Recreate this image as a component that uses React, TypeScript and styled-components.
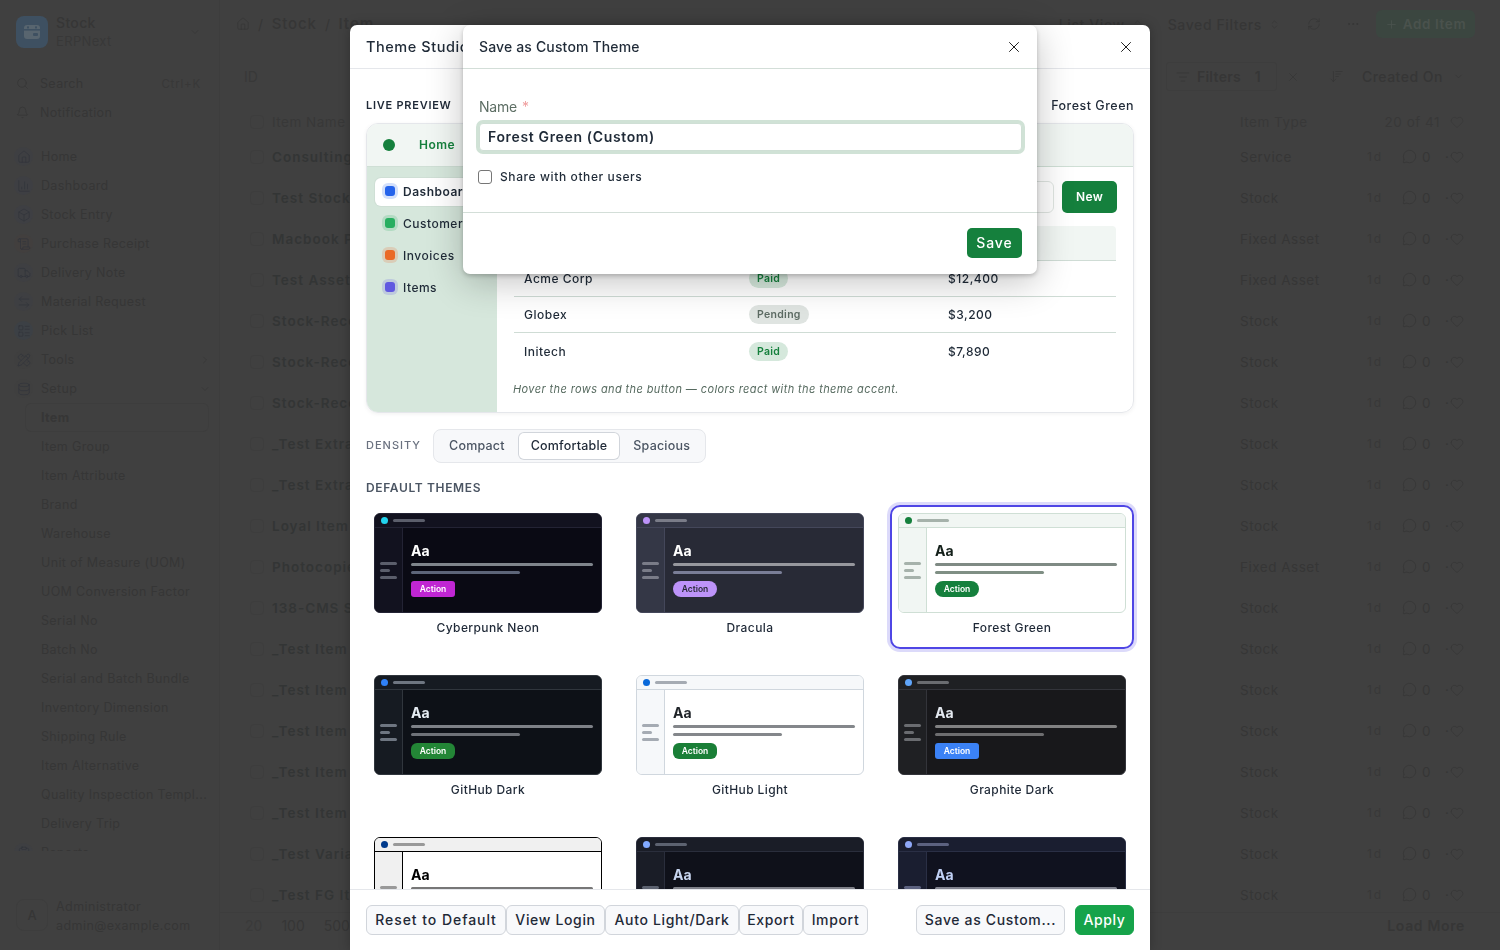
import React from 'react';
import styled, { createGlobalStyle } from 'styled-components';
import {
  ArrowDownWideNarrow, ArrowLeftRight, Bell, Box, ChartColumn, ChevronDown, ChevronRight, ChevronsUpDown,
  ClipboardList, Database, Ellipsis, Heart, House, LayoutList, ListFilter, MessageCircle, PencilRuler,
  Plus, RefreshCw, ScrollText, Search, Truck, X,
} from 'lucide-react';

const GlobalStyle = createGlobalStyle`
  * { box-sizing: border-box; }
  html, body { margin: 0; padding: 0; height: 100%; overflow: hidden; }
  body { font-family: Inter, "Noto Sans", "Liberation Sans", sans-serif; background: #404040; }
`;

// the page behind the dialogs is painted in its dimmed colours
const dim = { text: '#333535', soft: '#363636', faint: '#383838', line: '#3d3d3d' };

const Page = styled.div`
  width: 100vw;
  height: 100vh;
  display: flex;
  background: #404040;
  color: ${dim.soft};
  overflow: hidden;
`;
const Sidebar = styled.aside`
  width: 220px;
  flex: none;
  display: flex;
  flex-direction: column;
  border-right: 1px solid ${dim.line};
`;
const Brand = styled.div`
  height: 69px;
  padding: 16px 18px 0 16px;
  display: flex;
  align-items: flex-start;
  gap: 8px;
`;
const BrandText = styled.div`
  flex: 1;
  margin-top: -3px;
  font-size: 13px;
  line-height: 19px;
  letter-spacing: 0.35px;
`;
const BrandName = styled.div`
  font-size: 14px;
  font-weight: 500;
`;
const BrandSub = styled.div`
  color: ${dim.faint};
`;
const SearchRow = styled.div`
  height: 29px;
  padding: 0 18px 0 16px;
  display: flex;
  align-items: center;
  gap: 11px;
  font-size: 12.5px;
  letter-spacing: 0.35px;
  margin-bottom: ${p => p.$last ? '15px' : '0'};
`;
const Kbd = styled.span`
  margin-left: auto;
  font-size: 11.5px;
  letter-spacing: 0.8px;
  color: ${dim.faint};
`;
const Nav = styled.nav`
  flex: 1;
  overflow: hidden;
`;
const NavRow = styled.div`
  height: 29px;
  margin: 0 ${p => p.$sub ? '10px' : '0'} 0 ${p => p.$sub ? '25px' : '14px'};
  padding: 0 8px 0 ${p => p.$sub ? '16px' : '0'};
  display: flex;
  align-items: center;
  gap: 8px;
  font-size: 12.5px;
  letter-spacing: 0.35px;
  white-space: nowrap;
  font-weight: ${p => p.$active ? 700 : 400};
  border-radius: 6px;
  box-shadow: ${p => p.$active ? `inset 0 0 0 1px ${dim.line}` : 'none'};
`;
const NavIcon = styled.span`
  width: 19px;
  height: 19px;
  display: flex;
  align-items: center;
  justify-content: center;
  border-radius: 50%;
  background: ${p => p.$tint};
  color: #32353b;
`;
const NavEnd = styled.span`
  margin-left: auto;
  display: flex;
`;
const UserBox = styled.div`
  height: 99px;
  padding: 48px 16px 0;
  display: flex;
  gap: 8px;
`;
const Avatar = styled.div`
  width: 32px;
  height: 32px;
  border-radius: 8px;
  border: 1px solid ${dim.line};
  display: flex;
  align-items: center;
  justify-content: center;
  font-size: 13px;
  font-weight: 500;
`;
const UserText = styled.div`
  margin-top: -2px;
  font-size: 12.5px;
  line-height: 19px;
  letter-spacing: 0.45px;
`;
const Main = styled.main`
  flex: 1;
  min-width: 0;
  display: flex;
  flex-direction: column;
`;
const TopBar = styled.div`
  height: 48px;
  flex: none;
  padding: 0 25px 0 16px;
  display: flex;
  align-items: center;
  gap: 8px;
  font-size: 14px;
  letter-spacing: 0.6px;
`;
const Crumb = styled.span`
  font-size: 15px;
  letter-spacing: 0.9px;
  margin-top: -1px;
  font-weight: ${p => p.$strong ? 600 : 500};
`;
const TopAction = styled.span`
  display: flex;
  align-items: center;
  gap: 7px;
  margin-left: ${p => p.$gap};
  font-weight: 500;
`;
const AddButton = styled.div`
  margin-left: 8px;
  width: 99px;
  height: 28px;
  border-radius: 6px;
  background: #3b4640;
  color: #4a524d;
  display: flex;
  align-items: center;
  justify-content: center;
  gap: 5px;
  font-size: 13.5px;
  font-weight: 600;
`;
const FilterBar = styled.div`
  height: 29px;
  flex: none;
  margin: 14px 0 16px;
  padding: 0 36px 0 24px;
  display: flex;
  align-items: center;
  font-size: 14px;
  letter-spacing: 0.5px;
  font-weight: 500;
`;
const IdLabel = styled.span`
  font-weight: 400;
  letter-spacing: 0;
  color: ${dim.faint};
`;
const FilterBox = styled.div`
  width: 111px;
  height: 29px;
  margin-left: auto;
  padding: 0 15px 0 9px;
  display: flex;
  align-items: center;
  gap: 7px;
  border: 1px solid ${dim.line};
  border-radius: 3px;
  letter-spacing: 0.3px;
  font-weight: 600;
`;
const FilterCount = styled.span`
  margin-left: auto;
`;
const HeaderRow = styled.div`
  height: 29px;
  flex: none;
  padding: 0 36px 0 30px;
  display: grid;
  grid-template-columns: 22px 1fr 127px 83px 14px;
  align-items: center;
  font-size: 13.5px;
  letter-spacing: 0.5px;
  color: ${dim.faint};
`;
const Rows = styled.div`
  flex: 1;
  min-height: 0;
  overflow: hidden;
`;
const Row = styled.div`
  height: 41px;
  padding: 0 36px 0 30px;
  display: grid;
  grid-template-columns: 22px 1fr 127px 35px 43px 5px 14px;
  align-items: center;
  font-size: 13.5px;
  letter-spacing: 0.5px;
`;
const RowBox = styled.span`
  width: 14px;
  height: 14px;
  border: 1px solid ${dim.line};
  border-radius: 4px;
`;
const RowName = styled.span`
  font-weight: 600;
  letter-spacing: 1px;
  color: ${dim.text};
`;
const Age = styled.span`
  font-size: 12px;
  color: ${dim.faint};
  letter-spacing: 1.8px;
`;
const Counter = styled.span`
  display: flex;
  align-items: center;
  gap: 5px;
`;
const CountRight = styled.span`
  padding-right: 10px;
  text-align: right;
`;
const ListFooter = styled.div`
  height: 38px;
  flex: none;
  padding: 0 35px 12px 25px;
  display: flex;
  align-items: center;
  font-size: 14px;
  gap: 19px;
  border-top: 1px solid ${dim.line};
`;
const PageSize = styled.span`
  color: ${p => p.$on ? '#3a3a3a' : dim.soft};
`;
const LoadMore = styled.span`
  margin-left: auto;
  font-weight: 600;
  letter-spacing: 0.65px;
`;

const Dialog = styled.section`
  position: fixed;
  background: #fff;
  border-radius: 7px;
  display: flex;
  flex-direction: column;
  overflow: hidden;
`;
const StudioDialog = styled(Dialog)`
  left: 350px;
  top: 25px;
  width: 800px;
  height: 925px;
  border-radius: 7px 7px 0 0;
  box-shadow: 0 0 12px rgba(0, 0, 0, 0.25);
`;
const SaveDialog = styled(Dialog)`
  left: 463px;
  top: 25px;
  width: 574px;
  height: 249px;
  box-shadow: 0 2px 4px rgba(0, 0, 0, 0.2), 0 8px 36px rgba(0, 0, 0, 0.24);
`;
const DialogHead = styled.header`
  height: 44px;
  flex: none;
  padding: 0 ${p => p.$tight ? '14px' : '15px'} 0 16px;
  display: flex;
  align-items: center;
  justify-content: space-between;
  border-bottom: 1px solid ${p => p.$line};
  color: #1f2a37;
  font-size: ${p => p.$tight ? '14px' : '14.5px'};
  font-weight: 500;
  letter-spacing: ${p => p.$tight ? '0.15px' : '0.55px'};
  svg { color: #111; }
`;
const StudioBody = styled.div`
  flex: 1;
  min-height: 0;
  overflow: hidden;
  padding: 29px 16px 0;
`;
const SectionHead = styled.div`
  height: 14px;
  margin-bottom: 11px;
  display: flex;
  justify-content: space-between;
  align-items: center;
`;
const LiveLabel = styled.span`
  font-size: 11px;
  font-weight: 600;
  letter-spacing: 0.75px;
  color: #1f2937;
`;
const CurrentName = styled.span`
  font-size: 12.5px;
  font-weight: 500;
  letter-spacing: 0.5px;
  color: #1f2937;
`;
const Preview = styled.div`
  height: 290px;
  border: 1px solid #e5e7eb;
  border-radius: 12px;
  overflow: hidden;
  display: flex;
  flex-direction: column;
  box-shadow: 0 1px 4px rgba(0, 0, 0, 0.06);
`;
const PreviewTop = styled.div`
  height: 43px;
  flex: none;
  padding: 0 0 1px 16px;
  display: flex;
  align-items: center;
  gap: 24px;
  background: #f1f6f3;
  border-bottom: 1px solid #cfdfd5;
  color: #15803d;
  font-size: 12px;
  font-weight: 600;
  letter-spacing: 0.45px;
`;
const PreviewDot = styled.span`
  width: 12px;
  height: 12px;
  border-radius: 50%;
  background: #15803d;
`;
const PreviewMid = styled.div`
  flex: 1;
  min-height: 0;
  display: flex;
`;
const PreviewSide = styled.div`
  width: 130px;
  flex: none;
  padding: 11px 8px;
  display: flex;
  flex-direction: column;
  gap: 4px;
  background: #d6e7dc;
`;
const SideItem = styled.div`
  height: 28px;
  padding: 0 0 2px 7px;
  display: flex;
  align-items: center;
  gap: 5px;
  border-radius: 6px;
  font-size: 12px;
  letter-spacing: 0.5px;
  color: #1f2a37;
  background: ${p => p.$active ? '#fff' : 'transparent'};
  font-weight: ${p => p.$active ? 600 : 500};
  box-shadow: ${p => p.$active ? '0 0 0 1px #cfdfd5' : 'none'};
`;
const SideGlyph = styled.span`
  width: 10px;
  height: 10px;
  margin: 3px;
  border-radius: 3px;
  background: ${p => p.$color};
  box-shadow: 0 0 0 3px ${p => p.$color}33;
`;
const PreviewMain = styled.div`
  flex: 1;
  min-width: 0;
  padding: 14px 16px 0 16px;
`;
const PreviewTools = styled.div`
  display: flex;
  gap: 8px;
  justify-content: flex-end;
  margin-bottom: 13px;
`;
const PreviewSearch = styled.div`
  flex: 1;
  height: 32px;
  border: 1px solid #dfe5e1;
  border-radius: 6px;
`;
const NewButton = styled.div`
  width: 55px;
  height: 32px;
  padding-bottom: 1px;
  border-radius: 5px;
  background: #15803d;
  color: #fff;
  font-size: 12px;
  font-weight: 600;
  letter-spacing: 0.3px;
  display: flex;
  align-items: center;
  justify-content: center;
`;
const TableRow = styled.div`
  display: grid;
  grid-template-columns: 225px 199px 1fr;
  align-items: center;
  margin: 0 1px;
  height: ${p => p.$head ? '35px' : '36px'};
  background: ${p => p.$head ? '#f1f6f3' : 'transparent'};
  border-bottom: ${p => p.$plain ? 'none' : '1px solid #cfdcd5'};
  border-radius: ${p => p.$head ? '4px 4px 0 0' : '0'};
  font-size: 12px;
  font-weight: 500;
  letter-spacing: 0.5px;
  color: #1f2a37;
`;
const Cell = styled.div`
  padding-left: 10px;
`;
const Pill = styled.span`
  display: inline-block;
  height: 19px;
  line-height: 19px;
  padding: 0 8px;
  border-radius: 10px;
  font-size: 10.5px;
  font-weight: 600;
  letter-spacing: 0.3px;
  background: ${p => p.$pending ? '#dfe4e1' : '#d5e8dc'};
  color: ${p => p.$pending ? '#5c6b63' : '#15803d'};
`;
const PreviewNote = styled.div`
  margin-top: 13px;
  font-size: 11px;
  font-style: italic;
  letter-spacing: 0.4px;
  color: #566a5f;
`;
const DensityRow = styled.div`
  margin-top: 16px;
  display: flex;
  align-items: center;
  gap: 12px;
`;
const DensityLabel = styled.span`
  margin-top: -2px;
  font-size: 11px;
  font-weight: 500;
  letter-spacing: 1px;
  color: #6b7280;
`;
const Segments = styled.div`
  height: 34px;
  padding: 2px;
  display: flex;
  background: #f7f8fa;
  border: 1px solid #e5e7eb;
  border-radius: 8px;
`;
const Segment = styled.div`
  padding: 0 13px 1px;
  display: flex;
  align-items: center;
  font-size: 12.5px;
  font-weight: 500;
  letter-spacing: 0.2px;
  border-radius: 6px;
  color: ${p => p.$on ? '#1f2937' : '#4b5563'};
  background: ${p => p.$on ? '#fff' : 'transparent'};
  box-shadow: ${p => p.$on ? 'inset 0 0 0 1px #d1d5db' : 'none'};
`;
const ThemesLabel = styled.div`
  margin: 17px 0 9px;
  height: 16px;
  line-height: 16px;
  font-size: 12px;
  font-weight: 600;
  letter-spacing: 0.65px;
  color: #4b5563;
`;
const ThemeGrid = styled.div`
  display: grid;
  grid-template-columns: repeat(3, 244px);
  gap: 18px;
`;
const ThemeCard = styled.div`
  padding: 6px 6px 11px;
  border-radius: 10px;
  border: 2px solid ${p => p.$selected ? '#4f46e5' : 'transparent'};
  box-shadow: ${p => p.$selected ? '0 0 0 3px rgba(79, 70, 229, 0.2)' : 'none'};
`;
const Thumb = styled.div`
  height: 100px;
  border-radius: 6px;
  overflow: hidden;
  display: flex;
  flex-direction: column;
  border: 1px solid ${p => p.$t.line};
  background: ${p => p.$t.bg};
  color: ${p => p.$t.fg};
`;
const ThumbHead = styled.div`
  height: 14px;
  flex: none;
  padding-left: 6px;
  display: flex;
  align-items: center;
  gap: 5px;
  background: ${p => p.$t.panel};
  border-bottom: 1px solid ${p => p.$t.line};
`;
const ThumbDot = styled.span`
  width: 7px;
  height: 7px;
  border-radius: 50%;
  background: ${p => p.$color};
`;
const ThumbBar = styled.span`
  height: 3px;
  border-radius: 2px;
  background: ${p => p.$color};
  width: ${p => p.$w};
`;
const ThumbBody = styled.div`
  flex: 1;
  display: flex;
  min-height: 0;
`;
const ThumbSide = styled.div`
  width: 28px;
  flex: none;
  padding-left: 5px;
  display: flex;
  flex-direction: column;
  justify-content: center;
  align-items: flex-start;
  gap: 4px;
  background: ${p => p.$t.panel};
  border-right: 1px solid ${p => p.$t.line};
`;
const ThumbMain = styled.div`
  flex: 1;
  padding: 0 8px;
  display: flex;
  flex-direction: column;
  justify-content: center;
  align-items: flex-start;
`;
const ThumbTitle = styled.div`
  height: 17px;
  line-height: 16px;
  margin-bottom: 3px;
  font-size: 14px;
  font-weight: 700;
`;
const ThumbLine = styled.div`
  height: 3px;
  border-radius: 2px;
  width: ${p => p.$w};
  margin-bottom: ${p => p.$mb};
  background: ${p => p.$color};
`;
const ThumbAction = styled.div`
  width: 44px;
  height: 16px;
  line-height: 16px;
  text-align: center;
  font-size: 8.5px;
  font-weight: 600;
  border-radius: ${p => p.$t.radius};
  background: ${p => p.$t.btn};
  color: ${p => p.$t.btnFg};
`;
const ThemeName = styled.div`
  margin-top: 7px;
  height: 16px;
  line-height: 16px;
  text-align: center;
  font-size: 12px;
  font-weight: 500;
  letter-spacing: 0.4px;
  color: #1f2937;
`;
const StudioFoot = styled.footer`
  height: 61px;
  flex: none;
  padding: 15px 16px 0;
  display: flex;
  background: #fff;
  border-top: 1px solid #e5e7eb;
`;
const FootButton = styled.div`
  height: 30px;
  width: ${p => p.$w}px;
  padding-bottom: 2px;
  display: flex;
  align-items: center;
  justify-content: center;
  font-size: 14px;
  font-weight: 500;
  letter-spacing: ${p => p.$track || '0.65px'};
  white-space: nowrap;
  color: #1f2937;
  background: #f8f9fb;
  border: 1px solid #d1d5db;
  border-radius: 6px;
`;
const FootRight = styled.div`
  margin-left: auto;
  display: flex;
  gap: 10px;
`;
const ApplyButton = styled(FootButton)`
  background: #16a34a;
  border-color: #16a34a;
  color: #fff;
`;
const SaveBody = styled.div`
  flex: 1;
  padding: 29px 15px 0 16px;
  border-bottom: 1px solid #d3ded8;
`;
const FieldLabel = styled.label`
  display: block;
  height: 17px;
  line-height: 17px;
  font-size: 14px;
  color: #5d6e64;
  letter-spacing: -0.2px;
  margin-bottom: 8px;
`;
const Required = styled.span`
  margin-left: 5px;
  color: #f0a0a0;
`;
const FieldInput = styled.input`
  display: block;
  width: 100%;
  height: 28px;
  padding: 0 8px 2px;
  border: 1px solid #cfdfd5;
  border-radius: 4px;
  outline: none;
  box-shadow: 0 0 0 3px #d0e2d6;
  font-family: inherit;
  font-size: 14px;
  font-weight: 600;
  letter-spacing: 0.65px;
  color: #1f2a37;
`;
const ShareRow = styled.div`
  margin-top: 18px;
  display: flex;
  align-items: center;
  gap: 8px;
  font-size: 12px;
  font-weight: 500;
  letter-spacing: 0.6px;
  color: #1f2a37;
`;
const ShareBox = styled.span`
  width: 14px;
  height: 14px;
  margin-left: -1px;
  border: 1px solid #767676;
  border-radius: 3px;
`;
const SaveFoot = styled.footer`
  height: 61px;
  flex: none;
  padding: 15px 15px 0;
  display: flex;
  justify-content: flex-end;
`;
const SaveButton = styled.div`
  width: 55px;
  height: 30px;
  padding-bottom: 2px;
  border-radius: 5px;
  background: #15803d;
  color: #fff;
  font-size: 14px;
  font-weight: 500;
  letter-spacing: 0.9px;
  display: flex;
  align-items: center;
  justify-content: center;
`;

type Theme = { name: string; bg: string; panel: string; line: string; fg: string; dot: string; btn: string; btnFg: string; radius: string; bar: string; text1: string; text2: string };

const themes: Theme[] = [
  { name: 'Cyberpunk Neon', bg: '#0a0a14', panel: '#12121f', line: '#232334', fg: '#fff', dot: '#22d3ee', btn: '#c026d3', btnFg: '#fff', radius: '3px', bar: '#5b5e6b', text1: '#7f858c', text2: '#5d6579' },
  { name: 'Dracula', bg: '#282a36', panel: '#343746', line: '#44475a', fg: '#fff', dot: '#bd93f9', btn: '#bd93f9', btnFg: '#282a36', radius: '8px', bar: '#7a7c88', text1: '#96979d', text2: '#7a7e97' },
  { name: 'Forest Green', bg: '#fff', panel: '#f1f6f3', line: '#cfdfd5', fg: '#14201a', dot: '#15803d', btn: '#15803d', btnFg: '#fff', radius: '8px', bar: '#a6b2ab', text1: '#7f8a84', text2: '#7f8f84' },
  { name: 'GitHub Dark', bg: '#0d1117', panel: '#161b22', line: '#30363d', fg: '#e6edf3', dot: '#2f81f7', btn: '#238636', btnFg: '#fff', radius: '6px', bar: '#6e7681', text1: '#7d8187', text2: '#6e7278' },
  { name: 'GitHub Light', bg: '#fff', panel: '#f6f8fa', line: '#d0d7de', fg: '#1f2328', dot: '#0969da', btn: '#1a7f37', btnFg: '#fff', radius: '6px', bar: '#a5abb3', text1: '#84878b', text2: '#84878b' },
  { name: 'Graphite Dark', bg: '#18181b', panel: '#1f2023', line: '#33343a', fg: '#e4e9f0', dot: '#60a5fa', btn: '#3b82f6', btnFg: '#fff', radius: '3px', bar: '#6a6c70', text1: '#818182', text2: '#6e6e70' },
  { name: 'High Contrast', bg: '#fff', panel: '#f0f0f0', line: '#000', fg: '#000', dot: '#003a8c', btn: '#003a8c', btnFg: '#fff', radius: '3px', bar: '#999', text1: '#777', text2: '#777' },
  { name: 'Midnight', bg: '#0f111a', panel: '#1a1d27', line: '#2a2e3c', fg: '#c8d6f0', dot: '#82aaff', btn: '#82aaff', btnFg: '#0f111a', radius: '3px', bar: '#5c6270', text1: '#7e8088', text2: '#6a6d78' },
  { name: 'Tokyo Night', bg: '#10121f', panel: '#1a1e30', line: '#2a2f45', fg: '#c0d0f5', dot: '#8fa8f8', btn: '#7aa2f7', btnFg: '#10121f', radius: '3px', bar: '#5c6280', text1: '#80828e', text2: '#6a6d80' },
];

const mainNav = [
  { label: 'Home', Icon: House, tint: '#3e3f42' },
  { label: 'Dashboard', Icon: ChartColumn, tint: '#3e3f43' },
  { label: 'Stock Entry', Icon: Box, tint: '#3e3f43' },
  { label: 'Purchase Receipt', Icon: ScrollText, tint: '#423f3e' },
  { label: 'Delivery Note', Icon: Truck, tint: '#3e3f42' },
  { label: 'Material Request', Icon: ArrowLeftRight, tint: '#3e3f42' },
  { label: 'Pick List', Icon: LayoutList, tint: '#3c4045' },
  { label: 'Tools', Icon: PencilRuler, tint: '#3f3f3f' },
  { label: 'Setup', Icon: Database, tint: '#3f3f3f' },
];
const setupNav = ['Item', 'Item Group', 'Item Attribute', 'Brand', 'Warehouse', 'Unit of Measure (UOM)', 'UOM Conversion Factor', 'Serial No', 'Batch No', 'Serial and Batch Bundle', 'Inventory Dimension', 'Shipping Rule', 'Item Alternative', 'Quality Inspection Templ...', 'Delivery Trip'];

const items = [
  ['Consulting', 'Service'], ['Test Stock Item', 'Stock'], ['Macbook Pro', 'Fixed Asset'], ['Test Asset', 'Fixed Asset'],
  ['Stock-Reconciliation 1', 'Stock'], ['Stock-Reconciliation 2', 'Stock'], ['Stock-Reconciliation 3', 'Stock'],
  ['_Test Extra Item 1', 'Stock'], ['_Test Extra Item 2', 'Stock'], ['Loyal Item', 'Stock'], ['Photocopier', 'Fixed Asset'],
  ['138-CMS Shoe', 'Stock'], ['_Test Item 1', 'Stock'], ['_Test Item 2', 'Stock'], ['_Test Item 3', 'Stock'],
  ['_Test Item 4', 'Stock'], ['_Test Item 5', 'Stock'], ['_Test Variant', 'Stock'], ['_Test FG Item', 'Stock'],
];

const sideItems = [
  { label: 'Dashboard', color: '#2563eb', active: true },
  { label: 'Customers', color: '#27ae60' },
  { label: 'Invoices', color: '#ea6a26' },
  { label: 'Items', color: '#6058e0' },
];
const invoices = [
  { name: 'Acme Corp', status: 'Paid', total: '$12,400' },
  { name: 'Globex', status: 'Pending', total: '$3,200' },
  { name: 'Initech', status: 'Paid', total: '$7,890' },
];

const LogoMark = () => (
  <svg width="32" height="32" viewBox="0 0 32 32">
    <rect width="32" height="32" rx="8" fill="#3e5061" />
    <rect x="8" y="9" width="16" height="14" rx="3" fill="#58656f" />
    <rect x="8" y="13" width="16" height="1.6" fill="#3e5061" />
    <rect x="11" y="10.4" width="2" height="2" fill="#3e5061" />
    <rect x="19" y="10.4" width="2" height="2" fill="#3e5061" />
    <rect x="17" y="17" width="5" height="3" rx="1" fill="#3e5061" />
  </svg>
);

const Backdrop = () => (
  <Page>
    <Sidebar>
      <Brand>
        <LogoMark />
        <BrandText>
          <BrandName>Stock</BrandName>
          <BrandSub>ERPNext</BrandSub>
        </BrandText>
        <ChevronDown size={12} strokeWidth={1.5} style={{ marginTop: 10 }} />
      </Brand>
      <SearchRow><Search size={13} strokeWidth={1.5} />Search<Kbd>Ctrl+K</Kbd></SearchRow>
      <SearchRow $last><Bell size={13} strokeWidth={1.5} />Notification</SearchRow>
      <Nav>
        {mainNav.map(({ label, Icon, tint }) => (
          <NavRow key={label}>
            <NavIcon $tint={tint}><Icon size={14} strokeWidth={1.25} /></NavIcon>
            {label}
            {label === 'Tools' && <NavEnd><ChevronRight size={12} strokeWidth={1.5} /></NavEnd>}
            {label === 'Setup' && <NavEnd><ChevronDown size={12} strokeWidth={1.5} /></NavEnd>}
          </NavRow>
        ))}
        {setupNav.map((label, i) => (
          <NavRow key={label} $sub $active={i === 0}>{label}</NavRow>
        ))}
        <NavRow>
          <NavIcon $tint="#3e3f42"><ClipboardList size={14} strokeWidth={1.25} /></NavIcon>
          Reports
        </NavRow>
      </Nav>
      <UserBox>
        <Avatar>A</Avatar>
        <UserText>
          <div>Administrator</div>
          <div>admin@example.com</div>
        </UserText>
      </UserBox>
    </Sidebar>
    <Main>
      <TopBar>
        <House size={14} strokeWidth={1.25} />
        <span>/</span>
        <Crumb>Stock</Crumb>
        <span>/</span>
        <Crumb $strong>Item</Crumb>
        <TopAction $gap="auto">List View <ChevronsUpDown size={11} strokeWidth={1.5} /></TopAction>
        <TopAction $gap="17px">Saved Filters <ChevronsUpDown size={11} strokeWidth={1.5} /></TopAction>
        <TopAction $gap="19px"><RefreshCw size={14} strokeWidth={1.25} /></TopAction>
        <TopAction $gap="17px"><Ellipsis size={14} strokeWidth={1.25} /></TopAction>
        <AddButton><Plus size={13} strokeWidth={1.5} />Add Item</AddButton>
      </TopBar>
      <FilterBar>
        <IdLabel>ID</IdLabel>
        <FilterBox><ListFilter size={14} strokeWidth={1.25} />Filters<FilterCount>1</FilterCount></FilterBox>
        <X size={14} strokeWidth={1.25} style={{ marginLeft: 9 }} />
        <ArrowDownWideNarrow size={15} strokeWidth={1.25} style={{ marginLeft: 29, marginRight: 18 }} />
        <span>Created On</span>
        <ChevronDown size={11} strokeWidth={1.5} style={{ marginLeft: 10 }} />
      </FilterBar>
      <HeaderRow>
        <RowBox />
        <span>Item Name</span>
        <span>Item Type</span>
        <CountRight>20 of 41</CountRight>
        <Heart size={14} strokeWidth={1.25} />
      </HeaderRow>
      <Rows>
        {items.map(([name, type]) => (
          <Row key={name}>
            <RowBox />
            <RowName>{name}</RowName>
            <span>{type}</span>
            <Age>1d</Age>
            <Counter><MessageCircle size={15} strokeWidth={1.25} />0</Counter>
            <span>·</span>
            <Heart size={14} strokeWidth={1.25} />
          </Row>
        ))}
      </Rows>
      <ListFooter>
        <PageSize $on>20</PageSize>
        <PageSize>100</PageSize>
        <PageSize>500</PageSize>
        <LoadMore>Load More</LoadMore>
      </ListFooter>
    </Main>
  </Page>
);

const ThemeThumb = ({ t }: { t: Theme }) => (
  <Thumb $t={t}>
    <ThumbHead $t={t}>
      <ThumbDot $color={t.dot} />
      <ThumbBar $w="32px" $color={t.bar} />
    </ThumbHead>
    <ThumbBody>
      <ThumbSide $t={t}>
        <ThumbBar $w="17px" $color={t.bar} />
        <ThumbBar $w="10px" $color={t.bar} />
        <ThumbBar $w="17px" $color={t.bar} />
      </ThumbSide>
      <ThumbMain>
        <ThumbTitle>Aa</ThumbTitle>
        <ThumbLine $w="100%" $mb="5px" $color={t.text1} />
        <ThumbLine $w="60%" $mb="7px" $color={t.text2} />
        <ThumbAction $t={t}>Action</ThumbAction>
      </ThumbMain>
    </ThumbBody>
  </Thumb>
);

const ThemeStudio = () => (
  <StudioDialog>
    <DialogHead $line="#e5e7eb">
      Theme Studio
      <X size={18} strokeWidth={1.25} />
    </DialogHead>
    <StudioBody>
      <SectionHead>
        <LiveLabel>LIVE PREVIEW</LiveLabel>
        <CurrentName>Forest Green</CurrentName>
      </SectionHead>
      <Preview>
        <PreviewTop>
          <PreviewDot />
          Home
        </PreviewTop>
        <PreviewMid>
          <PreviewSide>
            {sideItems.map(s => (
              <SideItem key={s.label} $active={s.active}>
                <SideGlyph $color={s.color} />
                {s.label}
              </SideItem>
            ))}
          </PreviewSide>
          <PreviewMain>
            <PreviewTools>
              <PreviewSearch />
              <NewButton>New</NewButton>
            </PreviewTools>
            <TableRow $head>
              <Cell>Customer</Cell>
              <Cell>Status</Cell>
              <Cell>Amount</Cell>
            </TableRow>
            {invoices.map((r, i) => (
              <TableRow key={r.name} $plain={i === invoices.length - 1}>
                <Cell>{r.name}</Cell>
                <Cell><Pill $pending={r.status === 'Pending'}>{r.status}</Pill></Cell>
                <Cell>{r.total}</Cell>
              </TableRow>
            ))}
            <PreviewNote>Hover the rows and the button — colors react with the theme accent.</PreviewNote>
          </PreviewMain>
        </PreviewMid>
      </Preview>
      <DensityRow>
        <DensityLabel>DENSITY</DensityLabel>
        <Segments>
          <Segment>Compact</Segment>
          <Segment $on>Comfortable</Segment>
          <Segment>Spacious</Segment>
        </Segments>
      </DensityRow>
      <ThemesLabel>DEFAULT THEMES</ThemesLabel>
      <ThemeGrid>
        {themes.map(t => (
          <ThemeCard key={t.name} $selected={t.name === 'Forest Green'}>
            <ThemeThumb t={t} />
            <ThemeName>{t.name}</ThemeName>
          </ThemeCard>
        ))}
      </ThemeGrid>
    </StudioBody>
    <StudioFoot>
      <FootButton $w={140} $track="0.95px">Reset to Default</FootButton>
      <FootButton $w={99}>View Login</FootButton>
      <FootButton $w={134}>Auto Light/Dark</FootButton>
      <FootButton $w={64}>Export</FootButton>
      <FootButton $w={65}>Import</FootButton>
      <FootRight>
        <FootButton $w={149}>Save as Custom...</FootButton>
        <ApplyButton $w={59}>Apply</ApplyButton>
      </FootRight>
    </StudioFoot>
  </StudioDialog>
);

const SaveTheme = () => (
  <SaveDialog>
    <DialogHead $tight $line="#d3ded8">
      Save as Custom Theme
      <X size={18} strokeWidth={1.25} />
    </DialogHead>
    <SaveBody>
      <FieldLabel>Name<Required>*</Required></FieldLabel>
      <FieldInput readOnly value="Forest Green (Custom)" />
      <ShareRow><ShareBox />Share with other users</ShareRow>
    </SaveBody>
    <SaveFoot>
      <SaveButton>Save</SaveButton>
    </SaveFoot>
  </SaveDialog>
);

export default function App() {
  return (
    <>
      <GlobalStyle />
      <Backdrop />
      <ThemeStudio />
      <SaveTheme />
    </>
  );
}
